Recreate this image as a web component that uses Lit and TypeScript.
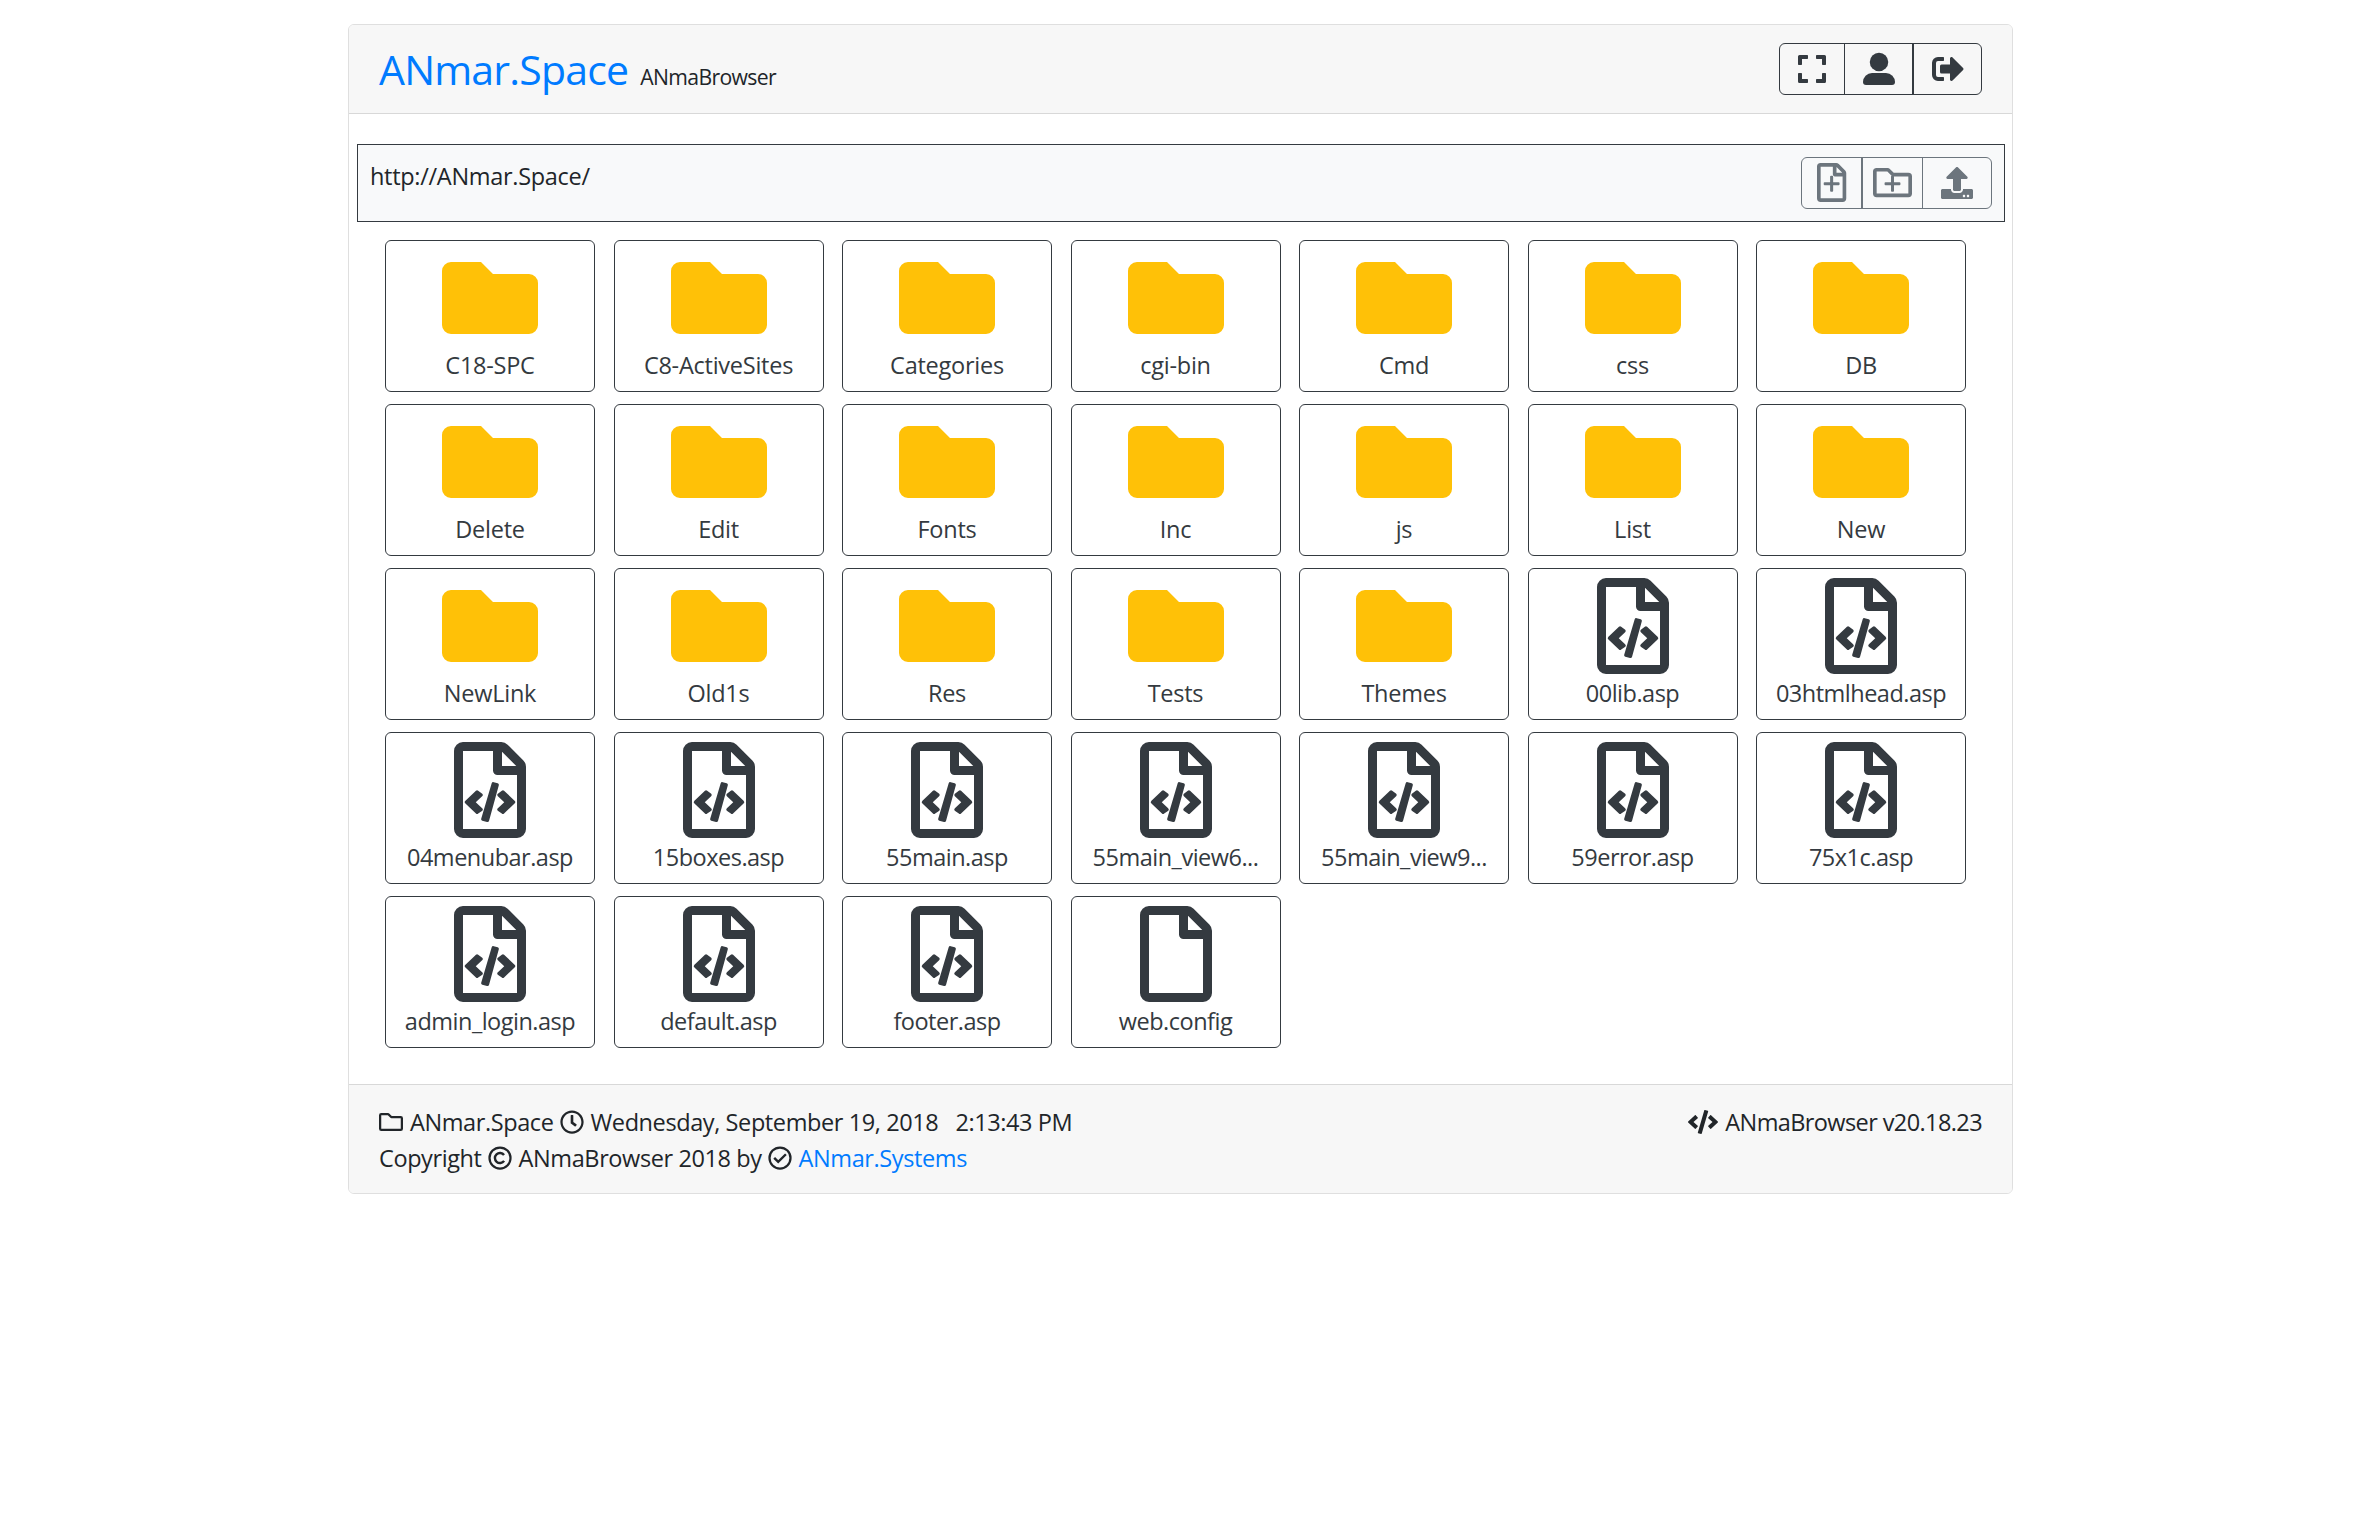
import { LitElement, html, css, svg } from "lit";
import { customElement, property } from "lit/decorators.js";

interface Glyph { box: string; body: unknown }

const FILE_OUTLINE = "M370 98L286 14A48 48 0 0 0 252 0H48A48 48 0 0 0 0 48V464A48 48 0 0 0 48 512H336A48 48 0 0 0 384 464V132A48 48 0 0 0 370 98ZM332 128H256V52ZM48 464V48H208V152A24 24 0 0 0 232 176H336V464Z";
const FOLDER_OUTLINE = "M464 128H272L218 74A34 34 0 0 0 195 64H48A48 48 0 0 0 0 112V400A48 48 0 0 0 48 448H464A48 48 0 0 0 512 400V176A48 48 0 0 0 464 128ZM464 400H48V112H188L243 167A32 32 0 0 0 265 176H464Z";

const GLYPHS: Record<string, Glyph> = {
  expand: { box: "0 0 448 512", body: svg`<path d="M0 180V56A24 24 0 0 1 24 32H148A12 12 0 0 1 160 44V84A12 12 0 0 1 148 96H64V180A12 12 0 0 1 52 192H12A12 12 0 0 1 0 180ZM288 44V84A12 12 0 0 0 300 96H384V180A12 12 0 0 0 396 192H436A12 12 0 0 0 448 180V56A24 24 0 0 0 424 32H300A12 12 0 0 0 288 44ZM436 320H396A12 12 0 0 0 384 332V416H300A12 12 0 0 0 288 428V468A12 12 0 0 0 300 480H424A24 24 0 0 0 448 456V332A12 12 0 0 0 436 320ZM160 468V428A12 12 0 0 0 148 416H64V332A12 12 0 0 0 52 320H12A12 12 0 0 0 0 332V456A24 24 0 0 0 24 480H148A12 12 0 0 0 160 468Z"/>` },
  user: { box: "0 0 512 512", body: svg`<circle cx="256" cy="144" r="148"/><path d="M144 320H368A144 144 0 0 1 512 464A48 48 0 0 1 464 512H48A48 48 0 0 1 0 464A144 144 0 0 1 144 320Z"/>` },
  signout: { box: "0 0 512 512", body: svg`<path d="M180 64H96A96 96 0 0 0 0 160V352A96 96 0 0 0 96 448H180A12 12 0 0 0 192 436V396A12 12 0 0 0 180 384H96A32 32 0 0 1 64 352V160A32 32 0 0 1 96 128H180A12 12 0 0 0 192 116V76A12 12 0 0 0 180 64ZM497 273L329 441C314 456 288 445 288 424V328H152A24 24 0 0 1 128 304V208A24 24 0 0 1 152 184H288V88C288 67 314 56 329 71L497 239A24 24 0 0 1 497 273Z"/>` },
  filePlus: { box: "0 0 384 512", body: svg`<path fill-rule="evenodd" d="${FILE_OUTLINE}"/><path d="M212 180A12 12 0 0 0 200 168H184A12 12 0 0 0 172 180V252H100A12 12 0 0 0 88 264V280A12 12 0 0 0 100 292H172V364A12 12 0 0 0 184 376H200A12 12 0 0 0 212 364V292H284A12 12 0 0 0 296 280V264A12 12 0 0 0 284 252H212Z"/>` },
  folderPlus: { box: "0 0 512 512", body: svg`<path fill-rule="evenodd" d="${FOLDER_OUTLINE}"/><path d="M276 180A12 12 0 0 0 264 168H248A12 12 0 0 0 236 180V252H164A12 12 0 0 0 152 264V280A12 12 0 0 0 164 292H236V364A12 12 0 0 0 248 376H264A12 12 0 0 0 276 364V292H348A12 12 0 0 0 360 280V264A12 12 0 0 0 348 252H276Z"/>` },
  upload: { box: "0 0 512 512", body: svg`<path d="M296 384h-80c-13.3 0-24-10.7-24-24V192h-87.7c-17.8 0-26.7-21.5-14.1-34.1L242.3 5.7c7.5-7.5 19.8-7.5 27.3 0l152.2 152.2c12.6 12.6 3.7 34.1-14.1 34.1H320v168c0 13.3-10.7 24-24 24zm216-8v112c0 13.3-10.7 24-24 24H24c-13.3 0-24-10.7-24-24V376c0-13.3 10.7-24 24-24h136v8c0 30.9 25.1 56 56 56h80c30.9 0 56-25.1 56-56v-8h136c13.3 0 24 10.7 24 24zm-124 88c0-11-9-20-20-20s-20 9-20 20 9 20 20 20 20-9 20-20zm64 0c0-11-9-20-20-20s-20 9-20 20 9 20 20 20 20-9 20-20z"/>` },
  folder: { box: "0 0 512 512", body: svg`<path d="M464 128H272L208 64H48A48 48 0 0 0 0 112V400A48 48 0 0 0 48 448H464A48 48 0 0 0 512 400V176A48 48 0 0 0 464 128Z"/>` },
  folderLine: { box: "0 0 512 512", body: svg`<path fill-rule="evenodd" d="${FOLDER_OUTLINE}"/>` },
  file: { box: "0 0 384 512", body: svg`<path fill-rule="evenodd" d="${FILE_OUTLINE}"/>` },
  fileCode: { box: "0 0 384 512", body: svg`<path fill-rule="evenodd" d="${FILE_OUTLINE}"/><path d="M150 353L116 321L150 289A9 9 0 0 0 150.500 276L129 260A9 9 0 0 0 117 260L61 313A10 10 0 0 0 61 328L117 381A9 9 0 0 0 129 381L151 366A9 9 0 0 0 150 353ZM234 289L268 321L234 353A9 9 0 0 0 233.500 366L255 381A9 9 0 0 0 267 381L323 328A10 10 0 0 0 323 313L267 260A9 9 0 0 0 255 260L234 276A9 9 0 0 0 234 289Z"/><path d="M212 214L233 220A9 9 0 0 1 239 231L187 420A9 9 0 0 1 176 426L151 420A9 9 0 0 1 145 409L201 220A9 9 0 0 1 212 214Z"/>` },
  clock: { box: "0 0 512 512", body: svg`<path d="M256 8C119 8 8 119 8 256s111 248 248 248 248-111 248-248S393 8 256 8zm0 448c-110.500 0-200-89.500-200-200S145.500 56 256 56s200 89.500 200 200-89.500 200-200 200zm61.800-104.400l-84.900-61.700c-3.100-2.300-4.900-5.900-4.900-9.700V116c0-6.600 5.400-12 12-12h32c6.600 0 12 5.400 12 12v141.700l66.800 48.600c5.400 3.900 6.500 11.400 2.600 16.800L334.600 349c-3.900 5.300-11.400 6.500-16.800 2.600z"/>` },
  copyright: { box: "0 0 512 512", body: svg`<g fill="none" stroke="currentColor" stroke-width="48"><circle cx="256" cy="256" r="224"/><path d="M344 318A108 108 0 1 1 342 192" stroke-width="52"/></g>` },
  check: { box: "0 0 512 512", body: svg`<g fill="none" stroke="currentColor" stroke-width="48"><circle cx="256" cy="256" r="224"/><path d="M132 252L218 338L382 176" stroke-width="52"/></g>` },
  code: { box: "0 0 640 512", body: svg`<path d="M278.900 511.500l-61-17.700c-6.400-1.800-10-8.500-8.200-14.900L346.200 8.700c1.800-6.400 8.500-10 14.900-8.200l61 17.700c6.400 1.800 10 8.500 8.200 14.900L293.800 503.300c-1.900 6.400-8.500 10.100-14.900 8.200zm-114-112.200l43.500-46.400c4.600-4.900 4.300-12.700-.8-17.200L117 256l90.600-79.700c5.100-4.500 5.500-12.300.8-17.200l-43.500-46.400c-4.500-4.800-12.100-5.100-17-.5L3.800 247.200c-5.100 4.700-5.100 12.800 0 17.500l144.100 135.100c4.900 4.600 12.500 4.400 17-.5zm327.200.6l144.100-135.100c5.100-4.700 5.100-12.800 0-17.500L492.100 112.100c-4.800-4.500-12.400-4.300-17 .5L431.600 159c-4.600 4.900-4.300 12.700.8 17.200L523 256l-90.600 79.700c-5.100 4.500-5.500 12.300-.8 17.200l43.500 46.400c4.500 4.900 12.100 5.100 17 .6z"/>` },
};

@customElement("fb-icon")
class FbIcon extends LitElement {
  @property() name = "file";
  static styles = css`
    :host { display: inline-block; height: 1em; line-height: 0; }
    svg { display: block; height: 100%; width: auto; fill: currentColor; overflow: visible; }
  `;
  render() {
    const g = GLYPHS[this.name];
    return html`<svg viewBox=${g.box}>${g.body}</svg>`;
  }
}

const FOLDERS = ["C18-SPC", "C8-ActiveSites", "Categories", "cgi-bin", "Cmd", "css", "DB", "Delete", "Edit", "Fonts", "Inc", "js", "List", "New", "NewLink", "Old1s", "Res", "Tests", "Themes"];
const FILES = ["00lib.asp", "03htmlhead.asp", "04menubar.asp", "15boxes.asp", "55main.asp", "55main_view6...", "55main_view9...", "59error.asp", "75x1c.asp", "admin_login.asp", "default.asp", "footer.asp", "web.config"];

@customElement("app-root")
class AppRoot extends LitElement {
  static styles = css`
    :host { display: block; height: 1539px; background: #fff; overflow: hidden;
      font: 23.5px/36px "Open Sans", "Noto Sans", sans-serif; letter-spacing: -0.4px; color: #212529; }
    * { box-sizing: border-box; }
    a { color: #007bff; text-decoration: none; }
    .card { width: 1665px; height: 1170px; margin: 24px auto 0; border: 1px solid #dfdfdf; border-radius: 6px;
      display: flex; flex-direction: column; overflow: hidden; }
    header { height: 89px; flex: none; background: #f7f7f7; border-bottom: 1px solid #d8d8d8; padding: 18px 30px;
      display: flex; justify-content: space-between; align-items: flex-start; }
    .brand { display: flex; align-items: baseline; gap: 12px; white-space: nowrap; }
    .title { font-size: 41px; line-height: 52px; letter-spacing: -0.8px; }
    .sub { font-size: 21.2px; letter-spacing: -0.65px; }
    .group { display: flex; height: 52px; border: 1px solid #343a40; border-radius: 6px; color: #343a40; }
    .btn { display: flex; align-items: center; justify-content: center; font-size: 32px; }
    .btn + .btn { border-left: 1px solid currentColor; }
    .btn.btn.thick { border-left-width: 2px; }
    .w64 { width: 64px; } .w68 { width: 68px; } .w69 { width: 69px; }
    .w59 { width: 59px; } .w61 { width: 61px; }
    .big { font-size: 39px; margin-bottom: 2px; }
    .bar { flex: none; height: 78px; margin: 30px 7px 0 8px; border: 1px solid #343a40; background: #f8f9fa;
      display: flex; justify-content: space-between; padding: 12px 12px 0; }
    .url { padding-top: 1px; letter-spacing: -0.3px; }
    .muted { color: #6c757d; border-color: #6c757d; }
    .grid { margin: 18px 0 0 36px; display: grid; grid-template-columns: repeat(7, 210px); gap: 12px 18.5px; }
    .tile { height: 152px; border: 1px solid #343a40; border-radius: 6px; padding-top: 9px; color: #343a40;
      display: flex; flex-direction: column; align-items: center; white-space: nowrap; }
    .pic { font-size: 96px; }
    .yellow { color: #ffc107; }
    .label { margin-top: 1px; letter-spacing: -0.5px; }
    .yellow + .label { letter-spacing: -0.25px; }
    footer { margin-top: auto; flex: none; height: 109px; background: #f7f7f7; border-top: 1px solid #d8d8d8; padding: 19px 30px 17px;
      display: flex; justify-content: space-between; }
    .line { display: flex; align-items: center; height: 36px; white-space: pre; }
    .sm { font-size: 24px; margin-right: 7px; }
    .gap { margin-left: 6px; }
    .version { letter-spacing: -0.6px; }
  `;
  render() {
    return html`
      <div class="card">
        <header>
          <div class="brand"><a class="title">ANmar.Space</a><span class="sub">ANmaBrowser</span></div>
          <div class="group">
            <span class="btn w64"><fb-icon name="expand"></fb-icon></span>
            <span class="btn w68"><fb-icon name="user"></fb-icon></span>
            <span class="btn thick w69"><fb-icon name="signout"></fb-icon></span>
          </div>
        </header>
        <div class="bar">
          <span class="url">http://ANmar.Space/</span>
          <div class="group muted">
            <span class="btn w59"><fb-icon class="big" name="filePlus"></fb-icon></span>
            <span class="btn thick w61"><fb-icon class="big" name="folderPlus"></fb-icon></span>
            <span class="btn w69"><fb-icon name="upload"></fb-icon></span>
          </div>
        </div>
        <div class="grid">
          ${FOLDERS.map((n) => html`<div class="tile"><fb-icon class="pic yellow" name="folder"></fb-icon><span class="label">${n}</span></div>`)}
          ${FILES.map((n) => html`<div class="tile"><fb-icon class="pic" name=${n.endsWith(".config") ? "file" : "fileCode"}></fb-icon><span class="label">${n}</span></div>`)}
        </div>
        <footer>
          <div>
            <div class="line"><fb-icon class="sm" name="folderLine"></fb-icon><span>ANmar.Space</span><fb-icon class="sm gap" name="clock"></fb-icon><span>Wednesday, September 19, 2018   2:13:43 PM</span></div>
            <div class="line"><span>Copyright</span><fb-icon class="sm gap" name="copyright"></fb-icon><span>ANmaBrowser 2018 by</span><fb-icon class="sm gap" name="check"></fb-icon><a>ANmar.Systems</a></div>
          </div>
          <div class="line version"><fb-icon class="sm" name="code"></fb-icon><span>ANmaBrowser v20.18.23</span></div>
        </footer>
      </div>`;
  }
}
